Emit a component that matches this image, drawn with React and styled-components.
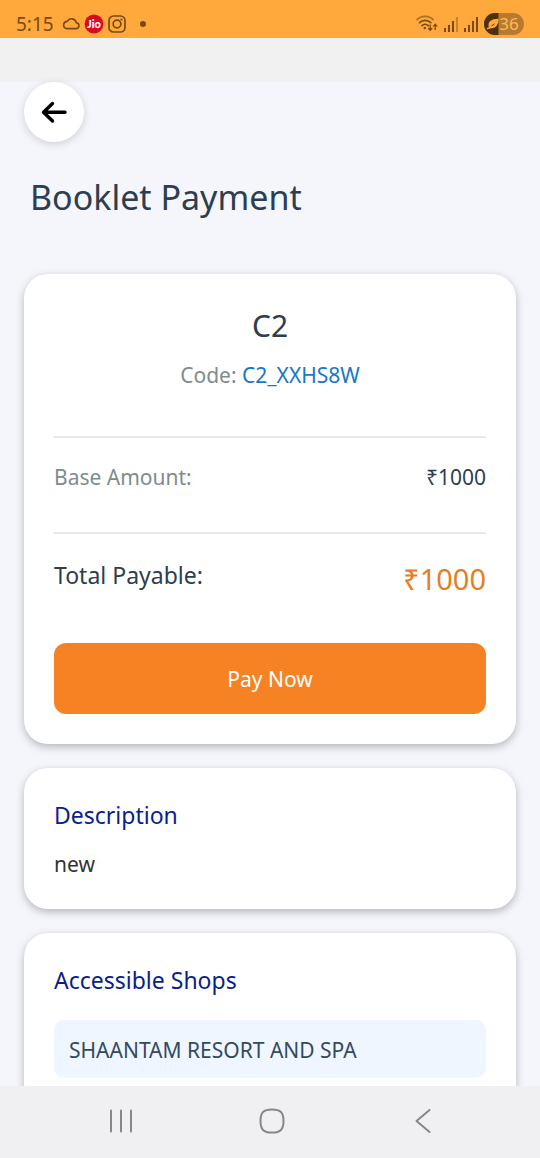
import React from "react";
import styled, { createGlobalStyle } from "styled-components";

const GlobalStyle = createGlobalStyle`
  *, *::before, *::after { box-sizing: border-box; }
  body {
    margin: 0;
    background: #f4f6fc;
    font-family: "Noto Sans", Roboto, sans-serif;
    font-weight: 400;
    color: #2c3e50;
  }
  h1, h2, p, ul, dl, dd { margin: 0; padding: 0; font-weight: 400; }
  button { border: 0; padding: 0; font: inherit; cursor: pointer; }
`;

const Screen = styled.div`
  height: 100vh;
  display: flex;
  flex-direction: column;
`;

const StatusBar = styled.header`
  flex: none;
  height: 38px;
  padding: 9px 16px 0;
  display: flex;
  justify-content: space-between;
  background: #ffa93d;
  color: #7a4a12;
`;

const StatusGroup = styled.div`
  display: flex;
  align-items: center;
  gap: ${(p) => p.$gap}px;
  height: 29px;
`;

const Clock = styled.time`
  font-size: 19px;
  line-height: 28px;
  margin-right: 4px;
`;

const Scroller = styled.main`
  flex: 1;
  min-height: 0;
  overflow-y: auto;
  scrollbar-width: none;
`;

const TopStrip = styled.div`
  height: 44px;
  background: #f1f1f1;
`;

const Content = styled.div`
  padding: 0 24px 24px;
`;

const BackButton = styled.button`
  position: relative;
  display: flex;
  align-items: center;
  justify-content: center;
  width: 60px;
  height: 60px;
  border-radius: 50%;
  background: #fff;
  color: #000;
  box-shadow: 0 2px 9px rgba(0, 0, 0, 0.16);
`;

const PageTitle = styled.h1`
  margin: 33px 6px 55px;
  font-size: 34px;
  line-height: 44px;
`;

const Card = styled.section`
  padding: 30px;
  border-radius: 24px;
  background: #fff;
  box-shadow: 0 3px 8px rgba(0, 0, 0, 0.26);

  & + & { margin-top: 24px; }
`;

const BookletHead = styled.div`
  padding-bottom: 46px;
  text-align: center;
`;

const BookletName = styled.h2`
  font-size: 30px;
  line-height: 44px;
`;

const BookletCode = styled.p`
  margin-top: 12px;
  font-size: 21px;
  line-height: 30px;
  color: #7f8c8d;

  span { color: #1976c8; }
`;

const AmountRow = styled.dl`
  display: flex;
  justify-content: space-between;
  align-items: flex-start;
  padding: ${(p) => (p.$total ? "23px 0 42px" : "24px 0 40px")};
  border-top: 2px solid #e8e8e8;
`;

const AmountLabel = styled.dt`
  font-size: ${(p) => (p.$total ? 23 : 21)}px;
  line-height: ${(p) => (p.$total ? 36 : 30)}px;
  color: ${(p) => (p.$total ? "#2c3e50" : "#7f8c8d")};
`;

const AmountValue = styled.dd`
  font-size: ${(p) => (p.$total ? 29 : 21)}px;
  line-height: ${(p) => (p.$total ? 44 : 30)}px;
  color: ${(p) => (p.$total ? "#e67e22" : "#2c3e50")};
`;

const PayButton = styled.button`
  display: block;
  width: 100%;
  height: 71px;
  border-radius: 12px;
  background: #f78223;
  color: #fff;
  font-size: 21px;
`;

const SectionTitle = styled.h2`
  font-size: 23px;
  line-height: 35px;
  color: #0a1e8a;
`;

const BodyText = styled.p`
  margin-top: 16px;
  font-size: 21px;
  line-height: 30px;
  color: #333;
`;

const ShopList = styled.ul`
  margin-top: 22px;
  list-style: none;
`;

const ShopItem = styled.li`
  padding: 15px 15px 13px;
  border-radius: 10px;
  background: #eff6ff;
  color: #34495e;
  font-size: 21px;
  line-height: 30px;
`;

const NavBar = styled.nav`
  flex: none;
  display: flex;
  justify-content: space-around;
  align-items: center;
  height: 72px;
  padding: 0 42px 2px 46px;
  background: #f0f0f2;
`;

const NavButton = styled.button`
  display: flex;
  align-items: center;
  justify-content: center;
  width: 60px;
  height: 48px;
  background: none;
  color: #87878a;
`;

const CloudIcon = () => (
  <svg width="18" height="13" viewBox="0 0 20 14" fill="none" stroke="currentColor" strokeWidth="1.8" aria-hidden="true">
    <path d="M5 12.7h10.2a3.3 3.3 0 0 0 .6-6.6A5.3 5.3 0 0 0 5.9 4.6 4.1 4.1 0 0 0 5 12.7z" strokeLinejoin="round" />
  </svg>
);

const JioIcon = () => (
  <svg width="20" height="20" viewBox="0 0 20 20" aria-label="Jio" role="img">
    <circle cx="10" cy="10" r="9.4" fill="#dc0a20" />
    <text x="10" y="13.5" textAnchor="middle" fill="#fff" fontFamily="Lato, sans-serif" fontWeight="900" fontSize="11">Jio</text>
  </svg>
);

const InstagramIcon = () => (
  <svg width="18" height="18" viewBox="0 0 18 18" fill="none" stroke="currentColor" strokeWidth="1.7" aria-hidden="true">
    <rect x="1" y="1" width="16" height="16" rx="4.5" />
    <circle cx="9" cy="9" r="3.9" />
    <circle cx="13.5" cy="4.6" r="1.1" fill="currentColor" stroke="none" />
  </svg>
);

const Dot = styled.i`
  width: 6px;
  height: 6px;
  margin-left: 10px;
  border-radius: 50%;
  background: currentColor;
`;

const WifiIcon = () => (
  <svg width="22" height="17" viewBox="0 0 22 17" fill="none" stroke="currentColor" strokeWidth="1.7" strokeLinecap="round" aria-hidden="true">
    <path d="M1 4.6C5.4 .2 13 .2 17.2 4.6" opacity=".6" />
    <path d="M3.4 7.7c3.2-3.1 8.3-3.1 11.4 0" />
    <path d="M6 10.6c1.8-1.7 4.5-1.7 6.2 0" />
    <circle cx="8.8" cy="13" r="1.2" fill="currentColor" stroke="none" />
    <path d="M14.2 9.8v5.4m-1.7-1.7 1.7 1.8 1.7-1.8M19.2 14.5V9.4m-1.7 1.7 1.7-1.8 1.7 1.8" strokeWidth="1.3" />
  </svg>
);

const SignalIcon = ({ weak }) => (
  <svg width="14" height="16" viewBox="0 0 14 16" fill="currentColor" aria-hidden="true">
    <rect x="0" y="12" width="2" height="4" />
    <rect x="4" y="9" width="2" height="7" />
    <rect x="8" y="5" width="2" height="11" />
    <rect x="12" y="1" width="2" height="15" opacity={weak ? 0.4 : 1} />
  </svg>
);

const BatteryIcon = () => (
  <svg width="40" height="22" viewBox="0 0 40 22" role="img" aria-label="Battery 36%">
    <rect width="40" height="22" rx="11" fill="#b87a2c" />
    <path d="M14.5 0H11a11 11 0 0 0 0 22h3.5z" fill="#4f3009" />
    <path d="M5.5 14C4 9 8 6.5 14 6.5c-.2 5-3 9-8 7.8M3.5 15.5l5-1.5" fill="#ffa93d" stroke="#ffa93d" strokeWidth="1.4" strokeLinecap="round" />
    <path d="M7.5 13l3-2.2" stroke="#4f3009" strokeWidth="1" />
    <text x="25" y="17" textAnchor="middle" fill="#ffb95c" fontFamily="Noto Sans, sans-serif" fontSize="17">36</text>
  </svg>
);

const ArrowLeftIcon = () => (
  <svg width="28" height="24" viewBox="0 0 28 24" fill="none" stroke="currentColor" strokeWidth="3.4" strokeLinecap="round" strokeLinejoin="round" aria-hidden="true">
    <path d="M12.5 3.5 3.5 12.2l9 8.8M4 12.2h21" />
  </svg>
);

const RecentsIcon = () => (
  <svg width="24" height="24" viewBox="0 0 24 24" stroke="currentColor" strokeWidth="2" strokeLinecap="round" aria-hidden="true">
    <path d="M2 1.5v21M12 1.5v21M22 1.5v21" />
  </svg>
);

const HomeIcon = () => (
  <svg width="26" height="26" viewBox="0 0 26 26" fill="none" stroke="currentColor" strokeWidth="2" aria-hidden="true">
    <path d="M13 1.5c8.5 0 11.5 3 11.5 11.5s-3 11.5-11.5 11.5S1.5 21.5 1.5 13 4.5 1.5 13 1.5z" />
  </svg>
);

const BackIcon = () => (
  <svg width="16" height="26" viewBox="0 0 16 26" fill="none" stroke="currentColor" strokeWidth="2" strokeLinecap="round" strokeLinejoin="round" aria-hidden="true">
    <path d="M14.5 2 1.5 13l13 11" />
  </svg>
);

const shops = ["SHAANTAM RESORT AND SPA"];

export default function App() {
  return (
    <>
      <GlobalStyle />
      <Screen>
        <StatusBar>
          <StatusGroup $gap={4}>
            <Clock>5:15</Clock>
            <CloudIcon />
            <JioIcon />
            <InstagramIcon />
            <Dot />
          </StatusGroup>
          <StatusGroup $gap={6}>
            <WifiIcon />
            <SignalIcon weak />
            <SignalIcon />
            <BatteryIcon />
          </StatusGroup>
        </StatusBar>
        <Scroller>
          <TopStrip />
          <Content>
            <BackButton type="button" aria-label="Back">
              <ArrowLeftIcon />
            </BackButton>
            <PageTitle>Booklet Payment</PageTitle>
            <Card>
              <BookletHead>
                <BookletName>C2</BookletName>
                <BookletCode>
                  Code: <span>C2_XXHS8W</span>
                </BookletCode>
              </BookletHead>
              <AmountRow>
                <AmountLabel>Base Amount:</AmountLabel>
                <AmountValue>₹1000</AmountValue>
              </AmountRow>
              <AmountRow $total>
                <AmountLabel $total>Total Payable:</AmountLabel>
                <AmountValue $total>₹1000</AmountValue>
              </AmountRow>
              <PayButton type="button">Pay Now</PayButton>
            </Card>
            <Card>
              <SectionTitle>Description</SectionTitle>
              <BodyText>new</BodyText>
            </Card>
            <Card>
              <SectionTitle>Accessible Shops</SectionTitle>
              <ShopList>
                {shops.map((shop) => (
                  <ShopItem key={shop}>{shop}</ShopItem>
                ))}
              </ShopList>
            </Card>
          </Content>
        </Scroller>
        <NavBar aria-label="System navigation">
          <NavButton type="button" aria-label="Recent apps">
            <RecentsIcon />
          </NavButton>
          <NavButton type="button" aria-label="Home">
            <HomeIcon />
          </NavButton>
          <NavButton type="button" aria-label="Back">
            <BackIcon />
          </NavButton>
        </NavBar>
      </Screen>
    </>
  );
}
